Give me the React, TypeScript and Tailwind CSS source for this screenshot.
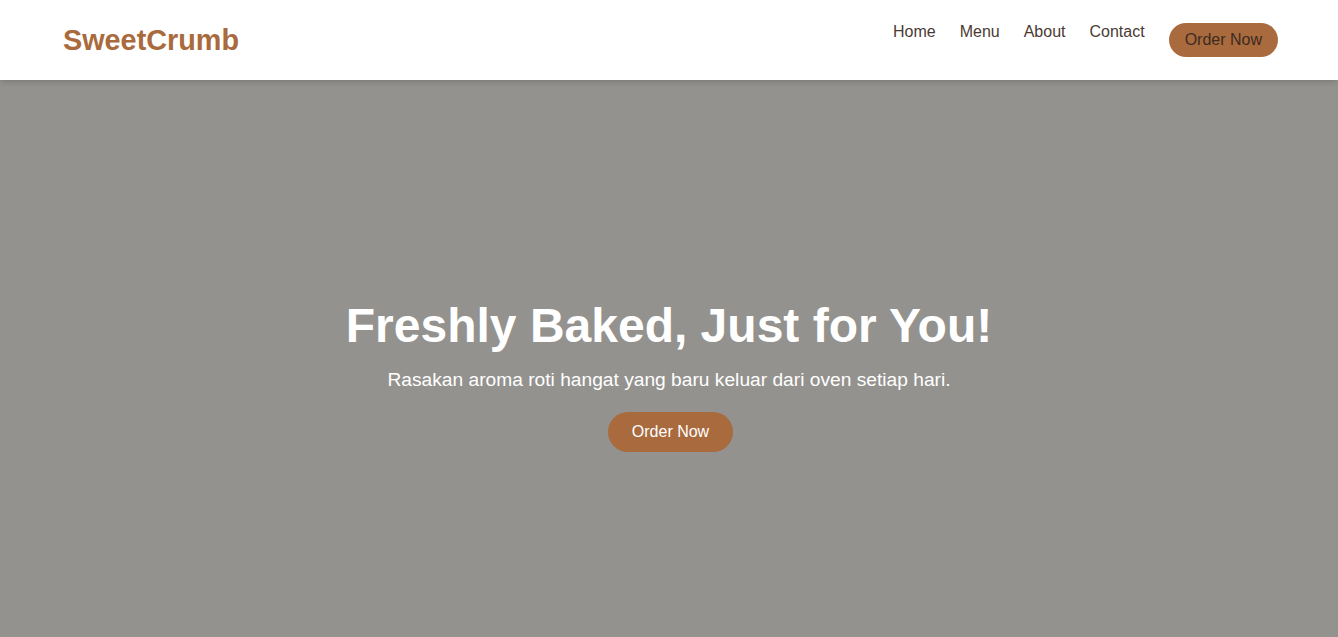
export default function App() {
  const links = ["Home", "Menu", "About", "Contact"];
  return (
    <div className="min-h-screen bg-[#93928e] font-['Liberation_Sans',Arial,sans-serif]">
      {/* header */}
      <header className="h-20 bg-white pl-[63px] pr-[60px] flex items-center justify-between shadow-md relative z-10">
        <h1 className="text-[28.8px] font-bold text-[#a96a3d] leading-none">SweetCrumb</h1>
        <ul className="flex gap-6 text-[#4a3a33] text-base leading-[18px]">
          {links.map((l) => (
            <li key={l}>
              <a href="#">{l}</a>
            </li>
          ))}
          <li>
            <a href="#" className="block bg-[#a96a3d] text-[#3d2b22] px-4 py-2 rounded-full leading-[18.4px]">
              Order Now
            </a>
          </li>
        </ul>
      </header>
      {/* hero */}
      <section className="flex flex-col items-center text-center text-white pt-[218px] min-h-[557px]">
        <h2 className="text-[48px] font-bold leading-[55px] mb-[16px]">Freshly Baked, Just for You!</h2>
        <p className="text-[19.2px] leading-[22px] mb-[21px]">Rasakan aroma roti hangat yang baru keluar dari oven setiap hari.</p>
        <a href="#" className="bg-[#a96a3d] text-white px-6 py-[11px] rounded-full leading-[18.4px] ml-[3px]">Order Now</a>
      </section>
    </div>
  );
}
